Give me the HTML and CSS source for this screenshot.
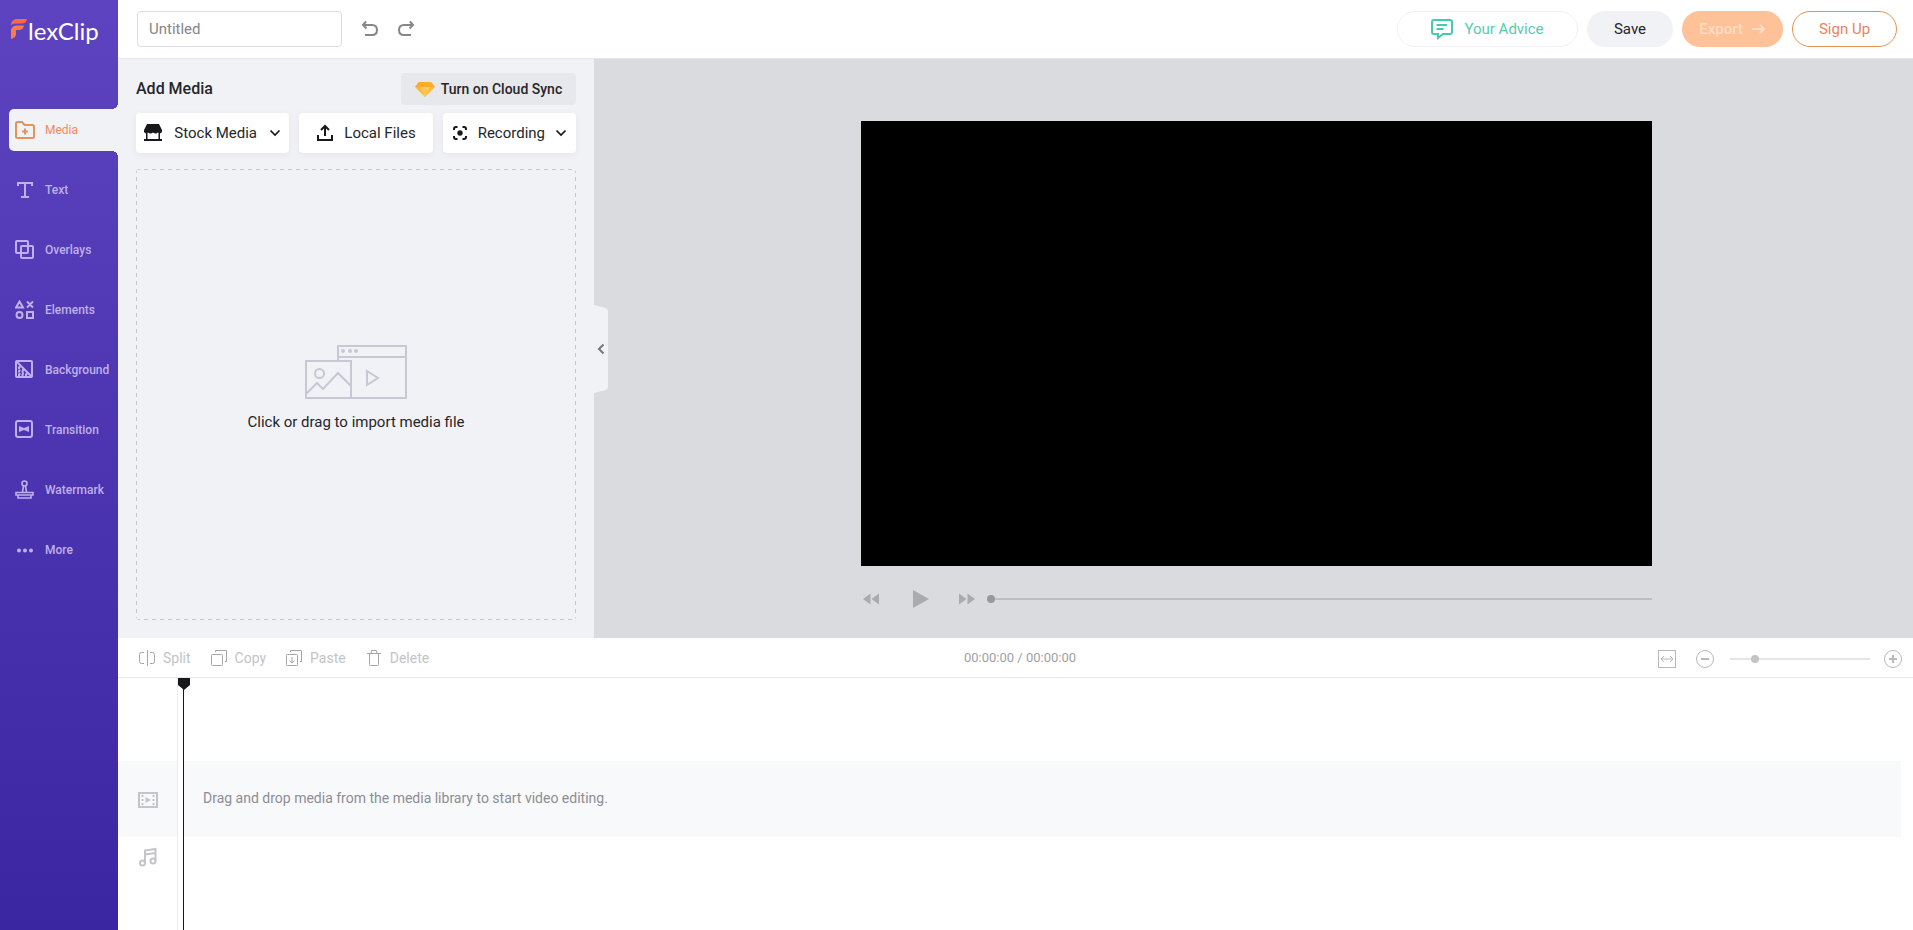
FILE: index.html
```html
<!DOCTYPE html>
<html lang="en">
<head>
<meta charset="utf-8">
<title>FlexClip</title>
<link rel="stylesheet" href="styles.css">
</head>
<body>
<div class="app">
  <aside class="sidebar">
    <a class="logo" href="#" aria-label="FlexClip">
      <svg class="logo-mark" width="18" height="22" viewBox="0 0 18 22"><path d="M1 6.500Q2 1 7 1H17Q16 5.500 12 5.500H6Q2 5.500 1 7.500Z" fill="#ff6a3d"/><path d="M1 21V12Q2 7.500 7 7.500H14Q13 12 9 12H6V16Q6 20 1 21Z" fill="#ff7a45"/></svg>
      <span class="logo-text">lexClip</span>
    </a>
    <nav class="nav">
      <a class="nav-item active" href="#">
        <svg width="20" height="20" viewBox="0 0 20 20"><path d="M1 16.500V3.500Q1 2 2.500 2H7L9.500 5H17.500Q19 5 19 6.500V16.500Q19 18 17.500 18H2.500Q1 18 1 16.500ZM10 8.500V14.500M7 11.500H13"/></svg>
        <span>Media</span></a>
      <a class="nav-item" href="#">
        <svg width="20" height="20" viewBox="0 0 20 20"><path d="M3 6V3H17V6M10 3V17M6 17H14"/></svg>
        <span>Text</span></a>
      <a class="nav-item" href="#">
        <svg width="20" height="20" viewBox="0 0 20 20"><rect x="1" y="1" width="12" height="12" rx="1"/><rect x="6" y="6" width="12" height="12" rx="1"/></svg>
        <span>Overlays</span></a>
      <a class="nav-item" href="#">
        <svg width="20" height="20" viewBox="0 0 20 20"><path d="M4.500 1.500L8 7.500H1ZM12 1.500L18 7.500M18 1.500L12 7.500"/><circle cx="4.500" cy="15" r="3"/><rect x="12" y="12" width="6" height="6"/></svg>
        <span>Elements</span></a>
      <a class="nav-item" href="#">
        <svg width="20" height="20" viewBox="0 0 20 20"><rect x="1" y="1" width="16" height="16" rx="1"/><path d="M1 1L17 17"/><path d="M3 8H6M3 11.500H9M3 15H13M4.500 6V17M8 9V17M11.500 13V17" stroke-dasharray="2 1.500"/></svg>
        <span>Background</span></a>
      <a class="nav-item" href="#">
        <svg width="20" height="20" viewBox="0 0 20 20"><rect x="1" y="1" width="16" height="16" rx="2"/><path class="fill" d="M4 6L9 8L14 6V12L9 10L4 12Z"/></svg>
        <span>Transition</span></a>
      <a class="nav-item" href="#">
        <svg class="thin" width="20" height="20" viewBox="0 0 20 20"><circle cx="9.500" cy="3.500" r="2.500"/><path d="M8.500 6L7.500 12M10.500 6L11.500 12M1 12.500H18V15H1ZM3 15V18H16V15"/></svg>
        <span>Watermark</span></a>
      <a class="nav-item" href="#">
        <svg width="20" height="20" viewBox="0 0 20 20"><g class="fill"><circle cx="4" cy="10.500" r="2"/><circle cx="10" cy="10.500" r="2"/><circle cx="16" cy="10.500" r="2"/></g></svg>
        <span>More</span></a>
    </nav>
  </aside>

  <div class="workspace">
    <header class="topbar">
      <input class="title-input" type="text" placeholder="Untitled" aria-label="Project name">
      <div class="history">
        <button class="icon-btn" aria-label="Undo"><svg width="18" height="18" viewBox="0 0 18 18"><path d="M5 1.500L2 5L5.500 8.500M2 5H11Q16 5 16 10T11 15H4"/></svg></button>
        <button class="icon-btn" aria-label="Redo"><svg width="18" height="18" viewBox="0 0 18 18"><path d="M13 1.500L16 5L12.500 8.500M16 5H7Q2 5 2 10T7 15H14"/></svg></button>
      </div>
      <div class="actions">
        <button class="pill advice"><svg width="22" height="22" viewBox="0 0 22 22"><path d="M3 2H19Q21 2 21 4V14Q21 16 19 16H12L7 20V16H3Q1 16 1 14V4Q1 2 3 2ZM5.500 7H16M5.500 11H12.500"/></svg>Your Advice</button>
        <button class="pill save">Save</button>
        <button class="pill export">Export<svg width="14" height="14" viewBox="0 0 14 14"><path d="M0 7H12M8 3L12 7L8 11"/></svg></button>
        <button class="pill signup">Sign Up</button>
      </div>
    </header>

    <main class="editor">
      <section class="panel">
        <div class="panel-head">
          <h1>Add Media</h1>
          <button class="cloud"><svg width="20" height="17" viewBox="0 0 20 17"><path d="M4 1H16L20 6L10 16L0 6Z" fill="#ffb833"/><path d="M4 1H16L20 6H0Z" fill="#f9ad2b"/><path d="M5 6H15L10 16Z" fill="#ffc659"/></svg>Turn on Cloud Sync</button>
        </div>
        <div class="sources">
          <button class="source stock"><svg width="18" height="18" viewBox="0 0 18 18"><path class="solid" d="M3 0H15L18 6V8Q16 10.500 14 8.500Q11.500 10.500 9 8.500Q6.500 10.500 4 8.500Q2 10.500 0 8V6ZM2 9H3.500V15H14.500V9H16V15H18V17H0V15H2Z"/></svg><span>Stock Media</span><svg class="chevron" width="12" height="12" viewBox="0 0 12 12"><path d="M1.500 3.500L6 8L10.500 3.500"/></svg></button>
          <button class="source"><svg width="18" height="18" viewBox="0 0 18 18"><path d="M9 12V2M5 6L9 2L13 6M2 11V16H16V11"/></svg><span>Local Files</span></button>
          <button class="source"><svg width="16" height="16" viewBox="0 0 16 16"><path d="M2 5V4Q2 2 4 2H5.500M10.500 2H12Q14 2 14 4V5M14 11V12Q14 14 12 14H10.500M5.500 14H4Q2 14 2 12V11"/><circle class="solid" cx="8" cy="8" r="2.700"/></svg><span>Recording</span><svg class="chevron" width="12" height="12" viewBox="0 0 12 12"><path d="M1.500 3.500L6 8L10.500 3.500"/></svg></button>
        </div>
        <button class="dropzone">
          <svg width="102" height="54" viewBox="0 0 102 54"><path d="M33 15V1H101V53H47M33 12H101M1 16H46V53H1ZM1 49L12 38L18 44L33 28L46 41"/><circle cx="14.500" cy="28.500" r="4.500"/><path d="M62 26L73 33L62 40Z"/><g class="dots"><circle cx="38" cy="6" r="2"/><circle cx="45" cy="6" r="2"/><circle cx="51" cy="6" r="2"/></g></svg>
          <span>Click or drag to import media file</span>
        </button>
        <button class="collapse" aria-label="Collapse panel"><svg width="14" height="88" viewBox="0 0 14 88"><path class="tab" d="M0 0L10 2.500Q14 3.500 14 6.500V81.500Q14 84.500 10 85.500L0 88Z"/><path class="arrow" d="M9.500 39.500L5 44L9.500 48.500"/></svg></button>
      </section>

      <section class="stage">
        <div class="player">
          <div class="video"></div>
          <div class="controls">
            <button aria-label="Rewind"><svg width="18" height="18" viewBox="0 0 18 18"><path d="M8.500 3.500V14.500L1 9ZM17 3.500V14.500L9.500 9Z"/></svg></button>
            <button aria-label="Play"><svg width="18" height="18" viewBox="0 0 18 18"><path d="M1 0L17 9L1 18Z"/></svg></button>
            <button aria-label="Fast forward"><svg width="18" height="18" viewBox="0 0 18 18"><path d="M1 3.500V14.500L8.500 9ZM9.500 3.500V14.500L17 9Z"/></svg></button>
            <input class="range seek" type="range" min="0" max="100" value="0" aria-label="Seek">
          </div>
        </div>
      </section>
    </main>

    <section class="timeline">
      <div class="toolbar">
        <div class="tools">
          <button><svg width="18" height="18" viewBox="0 0 18 18"><path d="M9.500 1V17M6 3.500H3.500Q1.500 3.500 1.500 5.500V12.500Q1.500 14.500 3.500 14.500H6M12 3.500H14.500Q16.500 3.500 16.500 5.500V12.500Q16.500 14.500 14.500 14.500H12"/></svg>Split</button>
          <button><svg width="18" height="18" viewBox="0 0 18 18"><rect x="1.500" y="5.500" width="11" height="11" rx="1"/><path d="M5.500 3V1.500H16.500V12.500H15"/></svg>Copy</button>
          <button><svg width="18" height="18" viewBox="0 0 18 18"><rect x="1.500" y="5.500" width="11" height="11" rx="1"/><path d="M5.500 3V1.500H16.500V12.500H15M7 8V14M4.500 11.500L7 14L9.500 11.500"/></svg>Paste</button>
          <button><svg width="18" height="18" viewBox="0 0 18 18"><path d="M2 4.500H16M6 4.500L6.500 1.500H11.500L12 4.500M4.500 4.500V15.500Q4.500 16.500 5.500 16.500H12.500Q13.500 16.500 13.500 15.500V4.500"/></svg>Delete</button>
        </div>
        <output class="time">00:00:00 / 00:00:00</output>
        <div class="zoom">
          <button aria-label="Fit timeline"><svg width="18" height="18" viewBox="0 0 18 18"><rect x=".5" y=".5" width="17" height="17"/><path d="M3 9H15M6 6L3 9L6 12M12 6L15 9L12 12"/></svg></button>
          <button aria-label="Zoom out"><svg width="18" height="18" viewBox="0 0 18 18"><circle cx="9" cy="9" r="8.500"/><path d="M5 9H13" stroke-width="2"/></svg></button>
          <input class="range scale" type="range" min="0" max="100" value="16" aria-label="Zoom">
          <button aria-label="Zoom in"><svg width="18" height="18" viewBox="0 0 18 18"><circle cx="9" cy="9" r="8.500"/><path d="M5 9H13M9 5V13" stroke-width="2"/></svg></button>
        </div>
      </div>
      <div class="tracks">
        <div class="gutter">
          <div class="track-icon video-icon"><svg width="20" height="18" viewBox="0 0 20 18"><rect x="1" y="2" width="18" height="14"/><path d="M4.500 4V15M15.500 4V15" stroke-dasharray="2 2"/><path class="fill" d="M7.500 6L13 9L7.500 12Z"/></svg></div>
          <div class="track-icon"><svg width="20" height="20" viewBox="0 0 20 20"><circle cx="4.500" cy="16" r="2.500"/><circle cx="15" cy="14" r="2.500"/><path d="M7 16V3.500L17.500 2V14M7 7.500L17.500 6"/></svg></div>
        </div>
        <div class="lanes">
          <div class="lane"><p>Drag and drop media from the media library to start video editing.</p></div>
          <div class="playhead"><svg width="12" height="12" viewBox="0 0 12 12"><path d="M0 0H12V7L6 12L0 7Z"/></svg></div>
        </div>
      </div>
    </section>
  </div>
</div>
</body>
</html>
```

FILE: styles.css
```css
* { box-sizing: border-box; }
body { margin: 0; font: 400 15px/20px Roboto, "Liberation Sans", sans-serif; color: #25262a; background: #fff; }
button, input { font: inherit; color: inherit; margin: 0; }
button { border: 0; padding: 0; background: none; display: flex; align-items: center; justify-content: center; cursor: pointer; }
a { color: inherit; text-decoration: none; }
svg { display: block; flex: none; fill: none; stroke: none; }

.app { display: grid; grid-template-columns: 118px minmax(0, 1fr); min-height: 100vh; }

.sidebar { background: linear-gradient(#5d43bf, #3b26a2); }
.logo { display: flex; align-items: center; height: 62px; padding-left: 10px; color: #fff; }
.logo-mark { margin-bottom: 4px; }
.logo-text { font: 400 24px/28px Lato, sans-serif; }
.nav { padding: 38px 0 0 9px; }
.nav-item { display: flex; align-items: center; gap: 10px; height: 42px; margin: 9px 0 18px; padding-left: 6px; font-size: 12px; font-weight: 500; color: #bfb0ee; }
.nav-item svg { stroke: currentColor; stroke-width: 2; }
.nav-item .thin { stroke-width: 1.6; }
.nav-item .fill { fill: currentColor; stroke: none; }
.nav-item.active { position: relative; background: #f1f2f6; color: #f0895f; font-weight: 400; border-radius: 5px 0 0 5px; }
.nav-item.active svg { stroke: #e4935a; }
.nav-item.active::before, .nav-item.active::after { content: ""; position: absolute; right: 0; width: 6px; height: 6px; }
.nav-item.active::before { bottom: 100%; background: radial-gradient(circle at 0 0, transparent 6px, #f1f2f6 6px); }
.nav-item.active::after { top: 100%; background: radial-gradient(circle at 0 100%, transparent 6px, #f1f2f6 6px); }

.workspace { display: grid; grid-template-rows: auto 1fr auto; min-width: 0; }
.topbar { display: flex; align-items: center; height: 59px; padding: 0 16px 0 19px; border-bottom: 1px solid #e6e7ea; }
.title-input { width: 205px; height: 36px; padding: 0 11px; border: 1px solid #dcdde0; border-radius: 4px; background: #fff; outline: 0; }
.title-input::placeholder { color: #858689; opacity: 1; }
.history { display: flex; gap: 18px; margin-left: 19px; }
.icon-btn svg { stroke: #858689; stroke-width: 2; }
.actions { display: flex; gap: 9px; margin-left: auto; }
.pill { height: 36px; border-radius: 18px; border: 1px solid transparent; }
.advice { width: 181px; gap: 11px; border-color: #f0f1f4; color: #55ccb4; }
.advice svg { stroke: #48c9ae; stroke-width: 2; }
.save { width: 86px; background: #f1f2f6; }
.export { width: 101px; gap: 9px; background: #ffc197; color: #ffddc5; font-weight: 500; }
.export svg { stroke: #ffddc5; stroke-width: 2; }
.signup { width: 105px; border-color: #e8904f; color: #e8845a; }

.editor { display: grid; grid-template-columns: 476px minmax(0, 1fr); }
.panel { position: relative; display: flex; flex-direction: column; padding: 14px 18px 18px; background: #f1f2f6; }
.panel-head { display: flex; align-items: center; justify-content: space-between; }
h1 { margin: 0; font-size: 16px; line-height: 20px; font-weight: 500; color: #25262a; }
.cloud { width: 175px; height: 32px; gap: 6px; border-radius: 4px; background: #e7e8eb; font-size: 14px; font-weight: 500; }
.sources { display: grid; grid-template-columns: 153fr 133fr 133fr; gap: 10px; margin: 8px 0 16px; }
.source { height: 40px; gap: 10px; border-radius: 4px; background: #fff; box-shadow: 0 2px 6px #e4e5ea; }
.stock { gap: 12px; }
.source svg { stroke: #17181a; stroke-width: 2; }
.source .chevron { stroke-width: 1.7; }
.source .solid { fill: #17181a; stroke: none; }
.dropzone {
  --h: repeating-linear-gradient(90deg, #c5c6ca 0 4px, transparent 4px 8px);
  --v: repeating-linear-gradient(#c5c6ca 0 4px, transparent 4px 8px);
  flex: 1; flex-direction: column; gap: 13px; padding-bottom: 12px; border-radius: 4px;
  background: var(--h) top / 100% 1px no-repeat, var(--h) bottom / 100% 1px no-repeat, var(--v) left / 1px 100% no-repeat, var(--v) right / 1px 100% no-repeat;
}
.dropzone svg { stroke: #c6c8d4; stroke-width: 2; }
.dropzone .dots { fill: #c6c8d4; stroke: none; }
.collapse { position: absolute; left: 100%; top: 50%; transform: translateY(-50%); z-index: 1; }
.collapse .tab { fill: #f1f2f6; }
.collapse .arrow { stroke: #77787c; stroke-width: 2; }

.stage { display: flex; align-items: center; justify-content: center; padding: 62px 0 0 6px; background: #dadbdf; }
.player { width: 60.2%; align-self: flex-start; }
.video { aspect-ratio: 16 / 9; background: #000; }
.controls { display: flex; align-items: center; height: 66px; padding-left: 1px; }
.controls button svg { fill: #aaabae; }
.controls button + button { margin-left: 32px; }
.controls button:nth-of-type(3) { margin-left: 28px; }

.range { appearance: none; height: 16px; background: none; }
.range::-webkit-slider-thumb { appearance: none; width: 8px; height: 8px; margin-top: -3px; border-radius: 4px; background: #98999d; }
.range::-webkit-slider-runnable-track { height: 2px; background: #bdbec2; }
.seek { flex: 1; min-width: 0; margin-left: 11px; }
.scale { width: 140px; margin: 0 14px 0 16px; }
.scale::-webkit-slider-thumb { background: #c4c4c6; }
.scale::-webkit-slider-runnable-track { background: #e5e5e6; }

.timeline { display: grid; grid-template-rows: auto 1fr; min-height: 292px; }
.toolbar { display: grid; grid-template-columns: 1fr auto 1fr; align-items: center; height: 40px; padding: 0 11px 0 20px; border-bottom: 1px solid #e8e8ea; color: #c3c4c6; }
.tools { display: flex; gap: 19px; font-size: 14px; }
.tools button { gap: 7px; }
.tools svg { stroke: #a4a5a8; stroke-width: 1; }
.time { font-size: 13px; color: #a0a1a4; }
.zoom { display: flex; align-items: center; justify-content: flex-end; padding-top: 2px; }
.zoom svg { stroke: #b7b8ba; stroke-width: 1; }
.zoom button + button { margin-left: 20px; }
.zoom .range + button { margin-left: 0; }
.tracks { display: grid; grid-template-columns: 60px minmax(0, 1fr); }
.gutter { padding-top: 83px; border-right: 1px solid #ececef; }
.track-icon { display: flex; align-items: center; justify-content: center; height: 40px; }
.track-icon svg { stroke: #c4c5c8; stroke-width: 2; }
.track-icon .fill { fill: #c4c5c8; stroke: none; }
.video-icon { height: 76px; padding-top: 2px; background: #f8f9fb; }
.lanes { position: relative; padding: 83px 12px 0 6px; }
.lane { display: flex; align-items: center; height: 76px; padding: 0 19px 2px; background: #f8f9fb; }
.lane p { margin: 0; font-size: 14px; color: #8d8e94; }
.playhead { position: absolute; top: 0; bottom: 0; left: 5px; width: 1px; background: #17181a; display: flex; justify-content: center; }
.playhead svg { fill: #17181a; height: 12px; }
```
